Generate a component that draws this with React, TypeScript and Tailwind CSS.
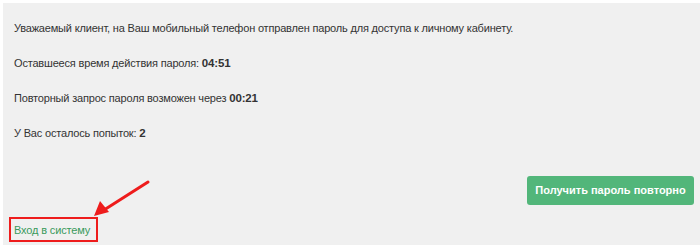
import React from 'react';

export default function App() {
  const font = { fontFamily: '"Liberation Sans", Arial, sans-serif' };

  return (
    <div className="w-[700px] h-[245px] bg-white pt-[3px] pl-[3px] overflow-hidden" style={font}>
      <div className="relative h-full bg-[#f0f0f0] flex flex-col">
        {/* Info */}
        <div className="pl-[11px] pt-[18px] text-[11px] leading-[14px] tracking-[-0.18px] text-[#333] flex flex-col gap-[21px]">
          <p>Уважаемый клиент, на Ваш мобильный телефон отправлен пароль для доступа к личному кабинету.</p>
          <p>
            Оставшееся время действия пароля: <b className="text-[11.5px]">04:51</b>
          </p>
          <p>
            Повторный запрос пароля возможен через <b className="text-[11.5px]">00:21</b>
          </p>
          <p>
            У Вас осталось попыток: <b className="text-[11.5px]">2</b>
          </p>
        </div>

        {/* Actions */}
        <div className="flex justify-end pr-[6px] mt-[36px]">
          <button className="w-[167px] h-[29px] rounded-[3px] bg-[#52b67a] text-white text-[11px] font-bold">
            Получить пароль повторно
          </button>
        </div>

        <div className="mt-[12px] ml-[6px]">
          <a className="inline-block whitespace-nowrap border-2 border-[#ee1c1c] w-[89px] h-[25px] pl-[3px] pt-[4px] text-[11px] leading-[14px] tracking-[-0.15px] text-[#3a9a5c]">
            Вход в систему
          </a>
        </div>

        {/* annotation arrow */}
        <svg className="absolute left-0 top-0" width="700" height="245" viewBox="3 3 700 245">
          <line x1="148" y1="182" x2="104" y2="210" stroke="#ee1c1c" strokeWidth="3" strokeLinecap="round" />
          <polygon points="94,216 100,201 109,212" fill="#ee1c1c" />
        </svg>
      </div>
    </div>
  );
}
